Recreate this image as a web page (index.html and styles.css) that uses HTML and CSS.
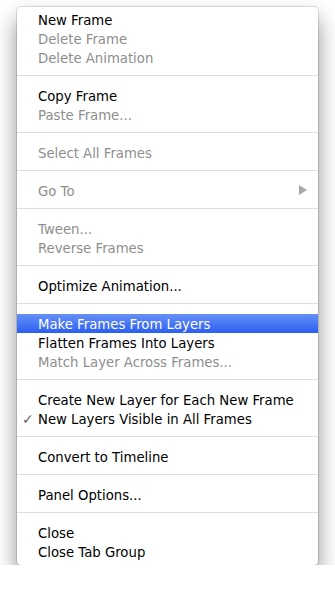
FILE: index.html
```html
<!DOCTYPE html>
<html lang="en">
<head>
<meta charset="UTF-8">
<meta name="viewport" content="width=device-width, initial-scale=1.0">
<title>Animation panel menu</title>
<link rel="stylesheet" href="styles.css">
</head>
<body>
  <div id="menu">
    <div class="item">New Frame</div>
    <div class="item disabled">Delete Frame</div>
    <div class="item disabled">Delete Animation</div>
    <div class="sep"></div>
    <div class="item">Copy Frame</div>
    <div class="item disabled">Paste Frame...</div>
    <div class="sep"></div>
    <div class="item disabled">Select All Frames</div>
    <div class="sep"></div>
    <div class="item disabled submenu">Go To <span class="arrow"></span></div>
    <div class="sep"></div>
    <div class="item disabled">Tween...</div>
    <div class="item disabled">Reverse Frames</div>
    <div class="sep"></div>
    <div class="item">Optimize Animation...</div>
    <div class="sep"></div>
    <div class="item selected">Make Frames From Layers</div>
    <div class="item">Flatten Frames Into Layers</div>
    <div class="item disabled">Match Layer Across Frames...</div>
    <div class="sep"></div>
    <div class="item">Create New Layer for Each New Frame</div>
    <div class="item checked"><span class="check">✓</span>New Layers Visible in All Frames</div>
    <div class="sep"></div>
    <div class="item">Convert to Timeline</div>
    <div class="sep"></div>
    <div class="item">Panel Options...</div>
    <div class="sep"></div>
    <div class="item">Close</div>
    <div class="item">Close Tab Group</div>
  </div>
</body>
</html>
```

FILE: styles.css
```css
body {
  margin: 0;
  padding: 0;
  background-color: #fff;
  font-family: "DejaVu Sans", "Liberation Sans", sans-serif;
  font-size: 13.25px;
}
#menu {
  width: 301px;
  margin: 7px 0 0 17px;
  padding: 3px 0 4px;
  background-color: #fff;
  border-radius: 4px;
  box-shadow: 0 0 0 1px rgba(0, 0, 0, 0.12), 0 12px 22px rgba(0, 0, 0, 0.45);
}
.item {
  position: relative;
  height: 19px;
  line-height: 21px;
  padding-left: 21px;
  color: #000;
  white-space: nowrap;
}
.disabled {
  color: #8e8e8e;
}
.selected {
  color: #fff;
  background: linear-gradient(#6690f6, #2b5ff1);
}
.sep {
  height: 1px;
  margin: 8px 0 10px;
  background-color: #dedede;
}
.arrow {
  position: absolute;
  right: 11px;
  top: 4px;
  width: 0;
  height: 0;
  border-top: 5px solid transparent;
  border-bottom: 5px solid transparent;
  border-left: 8px solid #a8a8a8;
}
.check {
  position: absolute;
  left: 5px;
  color: #666;
  font-size: 14px;
}
```
